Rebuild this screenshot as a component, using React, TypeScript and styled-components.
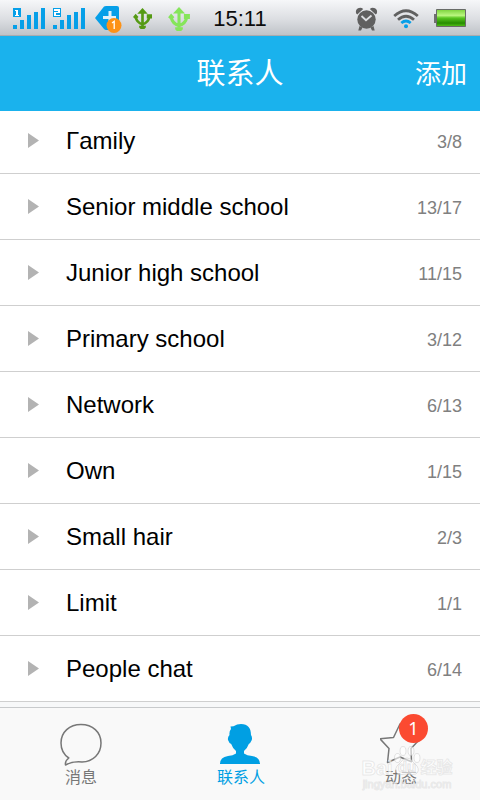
import React from "react";
import styled, { createGlobalStyle } from "styled-components";

const GlobalStyle = createGlobalStyle`
  *, *::before, *::after { box-sizing: border-box; }
  body {
    margin: 0;
    background: #ffffff;
    font-family: "Liberation Sans", "Noto Sans CJK SC", sans-serif;
  }
  button { font: inherit; border: 0; background: none; padding: 0; cursor: pointer; }
`;

const Screen = styled.div`
  display: flex;
  flex-direction: column;
  min-height: 100vh;
  background: #f7f8f9;
`;

const StatusBar = styled.div`
  display: grid;
  grid-template-columns: 1fr auto 1fr;
  align-items: center;
  height: 36px;
  padding: 2px 13px 0;
  border-bottom: 1px solid #a9abaf;
  background: linear-gradient(#f6f7f9, #dcdee2 55%, #bfc3c8);
  color: #0c0c0c;
`;

const StatusGroup = styled.div<{ $end?: boolean; $gap: number }>`
  display: flex;
  align-items: center;
  justify-content: ${(p) => (p.$end ? "flex-end" : "flex-start")};
  gap: ${(p) => p.$gap}px;

  svg { display: block; flex: none; }
`;

const Clock = styled.time`
  font-size: 22px;
  line-height: 32px;
`;

const Header = styled.header`
  display: grid;
  grid-template-columns: 1fr auto 1fr;
  align-items: center;
  height: 75px;
  padding: 0 13px;
  background: #1ab2ed;
  color: #ffffff;
  z-index: 1;
`;

const Title = styled.h1`
  grid-column: 2;
  margin: 0;
  font-size: 29px;
  font-weight: 400;
  line-height: 40px;
`;

const AddButton = styled.button`
  justify-self: end;
  color: inherit;
  font-size: 26px;
  line-height: 40px;
`;

const GroupList = styled.ul`
  margin: -3px 0 0;
  padding: 0;
  list-style: none;
  background: #ffffff;
`;

const GroupItem = styled.li`
  border-bottom: 1px solid #cfcfcf;
`;

const GroupButton = styled.button`
  display: flex;
  align-items: center;
  width: 100%;
  height: 65px;
  padding: 0 18px 0 28px;
  text-align: left;

  svg { display: block; flex: none; }
`;

const GroupName = styled.span`
  flex: 1;
  margin-left: 27px;
  color: #000000;
  font-size: 24px;
  line-height: 32px;
`;

const GroupCount = styled.span`
  padding-top: 2px;
  color: #808080;
  font-size: 18px;
  line-height: 24px;
`;

const TabBar = styled.nav`
  position: relative;
  display: grid;
  grid-template-columns: repeat(3, 1fr);
  height: 93px;
  margin-top: auto;
  border-top: 1px solid #c8cacc;
  background: #f9f9f9;
`;

const Tab = styled.button<{ $active?: boolean }>`
  display: flex;
  flex-direction: column;
  align-items: center;
  padding-top: 14px;
  padding-left: 2px;
  color: ${(p) => (p.$active ? "#009fe3" : "#777777")};
  font-size: 16px;
  line-height: 24px;

  svg { display: block; }
`;

const TabIcon = styled.span`
  position: relative;
  display: block;
  height: 44px;
`;

const Badge = styled.span`
  position: absolute;
  top: -8px;
  right: -6px;
  width: 29px;
  height: 29px;
  border-radius: 50%;
  background: #fb4a31;
  color: #ffffff;
  font-family: "Noto Sans", sans-serif;
  font-size: 18px;
  line-height: 29px;
  text-align: center;
`;

const Watermark = styled.div`
  position: absolute;
  right: 28px;
  bottom: 11px;
  width: 90px;
  color: rgba(255, 255, 255, 0.7);
  text-align: center;
  white-space: nowrap;
  -webkit-text-stroke: 1px rgba(190, 190, 190, 0.3);
  pointer-events: none;
`;

const WatermarkBrand = styled.div`
  display: flex;
  align-items: center;
  justify-content: center;
  font-size: 20px;
  font-weight: 700;
  line-height: 22px;

  svg { display: block; flex: none; margin-top: -15px; }
`;

const WatermarkCjk = styled.span`
  font-size: 16px;
`;

const WatermarkUrl = styled.div`
  font-size: 11px;
  line-height: 10px;
`;

const Signal = ({ slot }: { slot: "1" | "2" }) => (
  <svg width="32" height="22" viewBox="0 0 32 22" fill="#069fe8" shapeRendering="crispEdges" aria-label={`SIM ${slot}`}>
    <path d="M0 17h4v4H0zM7 12h4v9H7zM14 7h4v14h-4zM21 4h4v17h-4zM28 0h4v21h-4z" />
    <path d="M0 0h8v9H0z" />
    {slot === "1" ? (
      <path d="M2 2h3v5h1v1H2V7h1V3H2z" fill="#ffffff" />
    ) : (
      <path d="M1 1h6v4H3v2h4v1H1V4h4V3H1z" fill="#ffffff" />
    )}
  </svg>
);

const PlusTag = () => (
  <svg width="28" height="28" viewBox="0 0 28 28">
    <path d="M0 13 9 1.500Q10 1 11 1h11q2 0 2 2v20q0 2-2 2H11q-1 0-2-1z" fill="#069fe8" />
    <path d="M13.500 6h3v5H21v3h-4.500v5h-3v-5H8v-3h5.500z" fill="#e2f1fa" />
    <circle cx="19" cy="20.500" r="7.500" fill="#fd9217" />
    <path d="m17 18 2.200-1.700V24" fill="none" stroke="#ffffff" strokeWidth="1.300" />
  </svg>
);

const Usb = ({ color, size }: { color: string; size: number }) => (
  <svg width={size} height={size + 2} viewBox="0 0 20 22" fill={color}>
    <path d="M10 0 15.500 6h-11z" />
    <path d="M10 4v15M2.800 9q1 6.500 7.200 8 6.200-1.500 7.200-8" fill="none" stroke={color} strokeWidth="2.800" />
    <path d="M6.500 18.500h7v2l-1.500 1.500H8l-1.500-1.500zM14.500 6.500H20v4.500h-5.500zM2.800 6l3 3.500-3 2.500L0 9.500z" />
  </svg>
);

const Alarm = () => (
  <svg width="23" height="24" viewBox="0 0 23 24" fill="#606060">
    <circle cx="11.500" cy="12.500" r="9.200" />
    <path d="M1.200 6.500Q0 3 3 1.200 6 0 8.200 2L2.300 7.500zM21.800 6.500Q23 3 20 1.200 17 0 14.800 2l5.900 5.500z" />
    <path d="m4.500 19-1.200 4.500H6l1.500-3zM18.500 19l1.200 4.500H17l-1.500-3z" />
    <path d="m6.500 9 4.500 4.200 5.500-4.700" fill="none" stroke="#dddfe2" strokeWidth="1.800" />
  </svg>
);

const Wifi = () => (
  <svg width="26" height="20" viewBox="0 0 26 20" fill="none" strokeWidth="2.800">
    <path d="M1.200 7Q13-3.500 24.800 7" stroke="#606060" />
    <path d="M5 10.800q8-7 16 0" stroke="#606060" />
    <path d="M8.300 14q4.700-4 9.400 0" stroke="#069fe8" />
    <circle cx="13" cy="17.300" r="2" fill="#069fe8" />
  </svg>
);

const Battery = () => (
  <svg width="33" height="19" viewBox="0 0 33 19">
    <defs>
      <linearGradient id="charge" x1="0" y1="0" x2="0" y2="1">
        <stop offset="0" stopColor="#7bd23b" />
        <stop offset=".35" stopColor="#baf67f" />
        <stop offset=".5" stopColor="#58c520" />
        <stop offset=".8" stopColor="#268c00" />
        <stop offset="1" stopColor="#56c51a" />
      </linearGradient>
    </defs>
    <path d="M0 5h3v9H0z" fill="#707070" />
    <path d="M2.500 .5h29v17h-29z" fill="url(#charge)" stroke="#686b68" />
  </svg>
);

const Arrow = () => (
  <svg width="11" height="15" viewBox="0 0 11 15" aria-hidden="true">
    <path d="M0 0 11 7.500 0 15z" fill="#b3b3b3" />
  </svg>
);

const BubbleIcon = () => (
  <svg width="42" height="44" viewBox="0 0 42 44" fill="none" stroke="#777777" strokeWidth="1.500" strokeLinejoin="round">
    <path d="M5.500 43C5 40 6 38 8.800 36 3.500 32.500 1 27 1 21 1 10 9.500 2.500 21 2.500S41 10 41 21C41 32 33 39.500 22 40 14.500 39.300 10 40.500 5.500 43Z" />
  </svg>
);

const PersonIcon = () => (
  <svg width="42" height="44" viewBox="0 0 42 44" fill="#009fe3">
    <path d="M10.500 4.500 13.500 4.200Q17 2 21 2C28 2 31 6 31 13Q32.500 15 31.800 18 30.500 21 28.800 22 27.500 26 24 29V31.500Q27 33.500 32 34 40 35 40 42H0Q0 35 8 34 13 33.500 16 31.500V29Q12.500 26 11.200 22 9 21 8 18 7.500 15 9.500 13 9 9 11 7z" />
  </svg>
);

const StarIcon = () => (
  <svg width="42" height="44" viewBox="0 0 42 44" fill="none" stroke="#777777" strokeWidth="1.500" strokeLinejoin="round">
    <path d="M20 2 13.500 15.500 0 16.800 9 26.500 7.500 40.500 20 35 31.500 39.800 31 26.500 40 17 26.500 15.500Z" />
  </svg>
);

const Paw = () => (
  <svg width="28" height="31" viewBox="0 0 28 31" fill="#ffffff" fillOpacity=".6" stroke="#bcbcbc" strokeOpacity=".4">
    <ellipse cx="4.500" cy="13" rx="3" ry="4.500" />
    <ellipse cx="10" cy="6" rx="3" ry="4.500" />
    <ellipse cx="18" cy="6" rx="3" ry="4.500" />
    <ellipse cx="24" cy="13" rx="3" ry="4.500" />
    <path d="M14 13q4 0 6 4l4 4q3 5-1 8-3 1-9 0-6 1-9 0-4-3-1-8l4-4q2-4 6-4z" />
    <text x="14" y="27" textAnchor="middle" fontSize="15">du</text>
  </svg>
);

const groups = [
  { name: "Γamily", count: "3/8" },
  { name: "Senior middle school", count: "13/17" },
  { name: "Junior high school", count: "11/15" },
  { name: "Primary school", count: "3/12" },
  { name: "Network", count: "6/13" },
  { name: "Own", count: "1/15" },
  { name: "Small hair", count: "2/3" },
  { name: "Limit", count: "1/1" },
  { name: "People chat", count: "6/14" },
];

export default function App() {
  return (
    <Screen lang="zh-CN">
      <GlobalStyle />
      <StatusBar>
        <StatusGroup $gap={10}>
          <StatusGroup $gap={8}>
            <Signal slot="1" />
            <Signal slot="2" />
          </StatusGroup>
          <PlusTag />
          <StatusGroup $gap={16}>
            <Usb color="#559a14" size={19} />
            <Usb color="#86e55b" size={22} />
          </StatusGroup>
        </StatusGroup>
        <Clock>15:11</Clock>
        <StatusGroup $end $gap={15}>
          <Alarm />
          <Wifi />
          <Battery />
        </StatusGroup>
      </StatusBar>
      <Header>
        <Title>联系人</Title>
        <AddButton type="button">添加</AddButton>
      </Header>
      <GroupList>
        {groups.map((group) => (
          <GroupItem key={group.name}>
            <GroupButton type="button" aria-expanded={false}>
              <Arrow />
              <GroupName>{group.name}</GroupName>
              <GroupCount>{group.count}</GroupCount>
            </GroupButton>
          </GroupItem>
        ))}
      </GroupList>
      <TabBar>
        <Tab type="button">
          <TabIcon><BubbleIcon /></TabIcon>
          消息
        </Tab>
        <Tab type="button" $active aria-current="page">
          <TabIcon><PersonIcon /></TabIcon>
          联系人
        </Tab>
        <Tab type="button">
          <TabIcon>
            <StarIcon />
            <Badge>1</Badge>
          </TabIcon>
          动态
        </Tab>
        <Watermark>
          <WatermarkBrand>
            <span>Bai</span>
            <Paw />
            <WatermarkCjk>经验</WatermarkCjk>
          </WatermarkBrand>
          <WatermarkUrl>jingyan.baidu.com</WatermarkUrl>
        </Watermark>
      </TabBar>
    </Screen>
  );
}
